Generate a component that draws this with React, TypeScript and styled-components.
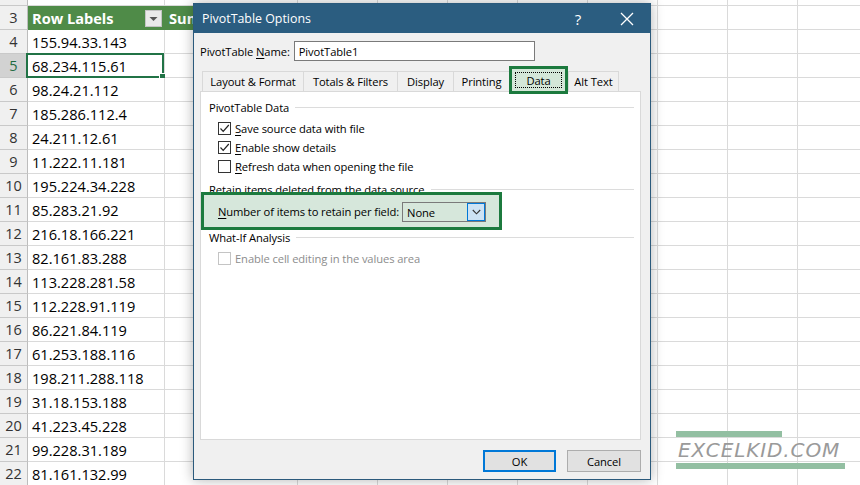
import React from "react";
import styled, { createGlobalStyle } from "styled-components";

const GlobalStyle = createGlobalStyle`
  html, body { margin: 0; padding: 0; background: #ffffff; overflow: hidden; }
  body { font-family: "Open Sans", "Noto Sans", sans-serif; }
  * { box-sizing: border-box; }
`;

const COLS = [137, 133, 80, 70, 70, 70, 70, 70, 70, 70];

const ROWS: [number, string][] = [
  [4, "155.94.33.143"],
  [5, "68.234.115.61"],
  [6, "98.24.21.112"],
  [7, "185.286.112.4"],
  [8, "24.211.12.61"],
  [9, "11.222.11.181"],
  [10, "195.224.34.228"],
  [11, "85.283.21.92"],
  [12, "216.18.166.221"],
  [13, "82.161.83.288"],
  [14, "113.228.281.58"],
  [15, "112.228.91.119"],
  [16, "86.221.84.119"],
  [17, "61.253.188.116"],
  [18, "198.211.288.118"],
  [19, "31.18.153.188"],
  [20, "41.223.45.228"],
  [21, "99.228.31.189"],
  [22, "81.161.132.99"],
];

const Page = styled.div`
  position: relative;
  width: 860px;
  height: 485px;
  overflow: hidden;
  background: #ffffff;
`;

const Sheet = styled.div`
  display: flex;
  flex-direction: column;
  width: 868px;
`;

const Row = styled.div<{ $h: number }>`
  display: flex;
  height: ${(p) => p.$h}px;
  flex: none;
`;

const RowHead = styled.div<{ $sel?: boolean }>`
  width: 28px;
  flex: none;
  display: flex;
  align-items: center;
  justify-content: center;
  background: ${(p) => (p.$sel ? "#d2d2d2" : "#f0f0f0")};
  color: ${(p) => (p.$sel ? "#1d6b41" : "#333333")};
  border-right: 1px solid #bdbdbd;
  border-bottom: 1px solid #c9c9c9;
  font-family: "Open Sans", "Noto Sans", sans-serif;
  font-size: 14.5px;
`;

const Cell = styled.div<{ $w: number; $head?: boolean }>`
  position: relative;
  width: ${(p) => p.$w}px;
  flex: none;
  display: flex;
  align-items: center;
  padding-left: 4px;
  white-space: nowrap;
  font-family: "Open Sans", "Noto Sans", sans-serif;
  font-size: 14.6px;
  color: ${(p) => (p.$head ? "#ffffff" : "#000000")};
  background: ${(p) => (p.$head ? "#4f8b48" : "#ffffff")};
  border-right: 1px solid ${(p) => (p.$head ? "#4f8b48" : "#dadada")};
  border-bottom: 1px solid ${(p) => (p.$head ? "#4f8b48" : "#dadada")};
  font-weight: ${(p) => (p.$head ? 700 : 400)};
`;

const Selection = styled.div`
  position: absolute;
  left: -2px;
  top: -1px;
  right: 0px;
  bottom: -1px;
  border: 2px solid #217346;
  pointer-events: none;
  &::after {
    content: "";
    position: absolute;
    right: -4px;
    bottom: -4px;
    width: 5px;
    height: 5px;
    background: #217346;
    border: 1px solid #ffffff;
  }
`;

const FilterBtn = styled.div`
  position: absolute;
  right: 2px;
  top: 4px;
  width: 17px;
  height: 17px;
  background: #e9e9e9;
  border: 1px solid #c4c4c4;
  display: flex;
  align-items: center;
  justify-content: center;
`;

const Dialog = styled.div`
  position: absolute;
  left: 193px;
  top: 3px;
  width: 458px;
  height: 477px;
  border: 1px solid #2b5a7c;
  background: #f0f0f0;
  box-shadow: 0 0 12px rgba(0, 0, 0, 0.3);
  display: flex;
  flex-direction: column;
  font-family: "Open Sans", "Noto Sans", sans-serif;
  font-size: 11.2px;
  letter-spacing: -0.1px;
  color: #000000;
`;

const TitleBar = styled.div`
  height: 29px;
  flex: none;
  background: #2b5d80;
  display: flex;
  align-items: center;
  padding-left: 8px;
  color: #ffffff;
`;

const TitleText = styled.div`
  flex: 1;
  font-size: 12.4px;
  letter-spacing: 0;
`;

const TitleBtn = styled.div<{ $w: number }>`
  width: ${(p) => p.$w}px;
  height: 29px;
  display: flex;
  align-items: center;
  justify-content: center;
  color: #ffffff;
  font-size: 15px;
`;

const Body = styled.div`
  flex: 1;
  display: flex;
  flex-direction: column;
  padding: 8px 8px 7px 6px;
`;

const NameRow = styled.div`
  display: flex;
  align-items: center;
  height: 20px;
  gap: 4px;
`;

const Label = styled.span`
  white-space: nowrap;
`;

const Key = styled.span`
  text-decoration: underline;
  text-underline-offset: 2px;
`;

const TextInput = styled.div`
  width: 241px;
  height: 20px;
  background: #ffffff;
  border: 1px solid #7a7a7a;
  display: flex;
  align-items: center;
  padding-left: 4px;
`;

const TabRow = styled.div`
  display: flex;
  height: 20px;
  margin-top: 10px;
  margin-left: 2px;
  position: relative;
  z-index: 2;
`;

const Tab = styled.div<{ $w: number; $active?: boolean }>`
  width: ${(p) => p.$w}px;
  flex: none;
  display: flex;
  align-items: center;
  justify-content: center;
  white-space: nowrap;
  background: ${(p) => (p.$active ? "#d4e7d8" : "#f0f0f0")};
  border: ${(p) => (p.$active ? "3px solid #1c7a3e" : "1px solid #d9d9d9")};
  border-bottom: ${(p) => (p.$active ? "3px solid #1c7a3e" : "none")};
  ${(p) => (p.$active ? "height: 28px; margin-top: -5px;" : "height: 20px; border-right: none;")}
  &:last-child { border-right: 1px solid #d9d9d9; }
`;

const Focus = styled.div`
  width: 47px;
  height: 16px;
  border: 1px dotted #000000;
  display: flex;
  align-items: center;
  justify-content: center;
`;

const Panel = styled.div`
  width: 441px;
  height: 349px;
  flex: none;
  background: #ffffff;
  border: 1px solid #d9d9d9;
  display: flex;
  flex-direction: column;
`;

const GroupHead = styled.div<{ $mt: number }>`
  display: flex;
  align-items: center;
  gap: 6px;
  height: 16px;
  margin-top: ${(p) => p.$mt}px;
  padding-left: 8px;
  padding-right: 6px;
  white-space: nowrap;
  &::after {
    content: "";
    flex: 1;
    height: 1px;
    background: #dcdcdc;
  }
`;

const CheckRow = styled.div<{ $disabled?: boolean; $mt?: number }>`
  display: flex;
  align-items: center;
  height: 19px;
  padding-left: 17px;
  gap: 4px;
  margin-top: ${(p) => p.$mt ?? 0}px;
  color: ${(p) => (p.$disabled ? "#8d8d8d" : "#000000")};
`;

const Box = styled.div<{ $disabled?: boolean }>`
  width: 13px;
  height: 13px;
  flex: none;
  border: 1px solid ${(p) => (p.$disabled ? "#c4c4c4" : "#333333")};
  background: #ffffff;
  display: flex;
  align-items: center;
  justify-content: center;
`;

const Highlight = styled.div`
  width: 301px;
  height: 38px;
  margin-top: -5px;
  border: 3px solid #1c7a3e;
  background: #d6e7db;
  display: flex;
  align-items: center;
  padding-left: 14px;
  gap: 3px;
  position: relative;
`;

const Select = styled.div`
  width: 84px;
  height: 20px;
  margin-top: 2px;
  border: 1px solid #7a7a7a;
  display: flex;
  align-items: stretch;
`;

const SelectValue = styled.div`
  flex: 1;
  display: flex;
  align-items: center;
  padding-left: 4px;
`;

const SelectBtn = styled.div`
  width: 18px;
  border: 1px solid #0078d7;
  background: #cde3f4;
  display: flex;
  align-items: center;
  justify-content: center;
`;

const Footer = styled.div`
  display: flex;
  justify-content: flex-end;
  gap: 11px;
  margin-top: 10px;
  padding-right: 1px;
`;

const Button = styled.div<{ $def?: boolean }>`
  width: ${(p) => (p.$def ? 73 : 74)}px;
  height: 22px;
  display: flex;
  align-items: center;
  justify-content: center;
  background: #e1e1e1;
  border: ${(p) => (p.$def ? "2px solid #0078d7" : "1px solid #adadad")};
`;

const Watermark = styled.div`
  position: absolute;
  left: 675px;
  top: 431px;
  width: 170px;
  display: flex;
  flex-direction: column;
  align-items: flex-start;
`;

const Bar = styled.div<{ $w: number }>`
  width: ${(p) => p.$w}px;
  height: 6px;
  background: #93bfa2;
  margin-left: 1px;
`;

const MarkText = styled.div`
  font-family: "DejaVu Sans", sans-serif;
  font-style: italic;
  font-size: 20px;
  letter-spacing: 0.9px;
  line-height: 26px;
  color: #9a9a9a;
  padding-left: 3px;
  white-space: nowrap;
`;

const Check = () => (
  <svg width="11" height="11" viewBox="0 0 11 11">
    <polyline points="1.5,5.5 4.2,8.3 9.8,2" fill="none" stroke="#222" strokeWidth="1.2" />
  </svg>
);

function GridRow({ num, text, head, sel }: { num: number; text?: string; head?: boolean; sel?: boolean }) {
  return (
    <Row $h={24}>
      <RowHead $sel={sel}>{num}</RowHead>
      {COLS.map((w, i) => {
        const isHead = head && i < 2;
        return (
          <Cell key={i} $w={w} $head={isHead}>
            {i === 0 && head ? "Row Labels" : null}
            {i === 1 && head ? "Sum" : null}
            {i === 0 && !head ? text : null}
            {i === 0 && head ? (
              <FilterBtn>
                <svg width="9" height="6" viewBox="0 0 9 6">
                  <polygon points="0.5,1 8.5,1 4.5,5" fill="#555" />
                </svg>
              </FilterBtn>
            ) : null}
            {i === 0 && sel ? <Selection /> : null}
          </Cell>
        );
      })}
    </Row>
  );
}

export default function App() {
  return (
    <Page>
      <GlobalStyle />
      <Sheet>
        <Row $h={6}>
          <RowHead />
          {COLS.map((w, i) => (
            <Cell key={i} $w={w} />
          ))}
        </Row>
        <GridRow num={3} head />
        {ROWS.map(([n, t]) => (
          <GridRow key={n} num={n} text={t} sel={n === 5} />
        ))}
      </Sheet>

      <Dialog>
        <TitleBar>
          <TitleText>PivotTable Options</TitleText>
          <TitleBtn $w={52}>?</TitleBtn>
          <TitleBtn $w={46}>
            <svg width="14" height="14" viewBox="0 0 14 14">
              <path d="M1 1 L13 13 M13 1 L1 13" stroke="#fff" strokeWidth="1.3" />
            </svg>
          </TitleBtn>
        </TitleBar>
        <Body>
          <NameRow>
            <Label>
              PivotTable <Key>N</Key>ame:
            </Label>
            <TextInput>PivotTable1</TextInput>
          </NameRow>
          <TabRow>
            <Tab $w={101}>Layout &amp; Format</Tab>
            <Tab $w={94}>Totals &amp; Filters</Tab>
            <Tab $w={56}>Display</Tab>
            <Tab $w={56}>Printing</Tab>
            <Tab $w={59} $active>
              <Focus>Data</Focus>
            </Tab>
            <Tab $w={51}>Alt Text</Tab>
          </TabRow>
          <Panel>
            <GroupHead $mt={7}>PivotTable Data</GroupHead>
            <CheckRow $mt={4}>
              <Box>
                <Check />
              </Box>
              <Label>
                <Key>S</Key>ave source data with file
              </Label>
            </CheckRow>
            <CheckRow>
              <Box>
                <Check />
              </Box>
              <Label>
                <Key>E</Key>nable show details
              </Label>
            </CheckRow>
            <CheckRow>
              <Box />
              <Label>
                <Key>R</Key>efresh data when opening the file
              </Label>
            </CheckRow>
            <GroupHead $mt={5}>Retain items deleted from the data source</GroupHead>
            <Highlight>
              <Label>
                <Key>N</Key>umber of items to retain per field:
              </Label>
              <Select>
                <SelectValue>None</SelectValue>
                <SelectBtn>
                  <svg width="9" height="6" viewBox="0 0 9 6">
                    <polyline points="0.8,1 4.5,4.8 8.2,1" fill="none" stroke="#333" strokeWidth="1.1" />
                  </svg>
                </SelectBtn>
              </Select>
            </Highlight>
            <GroupHead $mt={-1}>What-If Analysis</GroupHead>
            <CheckRow $disabled $mt={4}>
              <Box $disabled />
              <Label>Enable cell editing in the values area</Label>
            </CheckRow>
          </Panel>
          <Footer>
            <Button $def>OK</Button>
            <Button>Cancel</Button>
          </Footer>
        </Body>
      </Dialog>

      <Watermark>
        <Bar $w={106} />
        <MarkText>EXCELKID.COM</MarkText>
        <Bar $w={169} />
      </Watermark>
    </Page>
  );
}
